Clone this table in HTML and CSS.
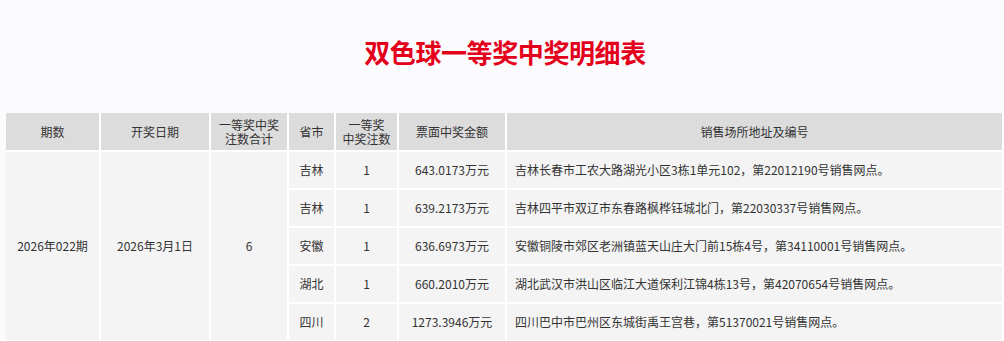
FILE: index.html
```html
<!DOCTYPE html>
<html lang="zh-CN">
<head>
<meta charset="utf-8">
<title>双色球一等奖中奖明细表</title>
<link rel="stylesheet" href="styles.css">
</head>
<body>
<div class="page">
  <h1 class="title">双色球一等奖中奖明细表</h1>
  <table class="detail">
    <colgroup>
      <col class="c1"><col class="c2"><col class="c3"><col class="c4"><col class="c5"><col class="c6"><col class="c7">
    </colgroup>
    <thead>
      <tr>
        <th>期数</th>
        <th>开奖日期</th>
        <th>一等奖中奖<br>注数合计</th>
        <th>省市</th>
        <th>一等奖<br>中奖注数</th>
        <th>票面中奖金额</th>
        <th>销售场所地址及编号</th>
      </tr>
    </thead>
    <tbody>
      <tr>
        <td rowspan="5">2026年022期</td>
        <td rowspan="5">2026年3月1日</td>
        <td rowspan="5">6</td>
        <td>吉林</td>
        <td>1</td>
        <td>643.0173万元</td>
        <td class="addr">吉林长春市工农大路湖光小区3栋1单元102，第22012190号销售网点。</td>
      </tr>
      <tr>
        <td>吉林</td>
        <td>1</td>
        <td>639.2173万元</td>
        <td class="addr">吉林四平市双辽市东春路枫桦钰城北门，第22030337号销售网点。</td>
      </tr>
      <tr>
        <td>安徽</td>
        <td>1</td>
        <td>636.6973万元</td>
        <td class="addr">安徽铜陵市郊区老洲镇蓝天山庄大门前15栋4号，第34110001号销售网点。</td>
      </tr>
      <tr>
        <td>湖北</td>
        <td>1</td>
        <td>660.2010万元</td>
        <td class="addr">湖北武汉市洪山区临江大道保利江锦4栋13号，第42070654号销售网点。</td>
      </tr>
      <tr>
        <td>四川</td>
        <td>2</td>
        <td>1273.3946万元</td>
        <td class="addr">四川巴中市巴州区东城街禹王宫巷，第51370021号销售网点。</td>
      </tr>
    </tbody>
  </table>
</div>
</body>
</html>
```
FILE: styles.css
```css
html, body {
  margin: 0;
  padding: 0;
  background: #fbfbfe;
  overflow: hidden;
}
.page {
  padding-left: 6px;
  font-family: "Noto Sans CJK SC", sans-serif;
  color: #333;
}
.title {
  margin: 0;
  padding-top: 37px;
  height: 76px;
  box-sizing: border-box;
  line-height: 30px;
  font-size: 26px;
  font-weight: bold;
  color: #e4001b;
  text-align: center;
  font-family: "Noto Sans CJK SC", sans-serif;
  letter-spacing: -0.4px;
  height: 113px;
}
.detail {
  width: 998px;
  table-layout: fixed;
  border-collapse: separate;
  border-spacing: 0;
  font-size: 12px;
}
.c1 { width: 95px; }
.c2 { width: 110px; }
.c3 { width: 78px; }
.c4 { width: 47px; }
.c5 { width: 63px; }
.c6 { width: 108px; }
.c7 { width: 497px; }
.detail th, .detail td {
  box-sizing: border-box;
  border-right: 2px solid #fff;
  border-bottom: 2px solid #fff;
  text-align: center;
  padding: 0 1px;
  font-family: "Noto Sans CJK SC", sans-serif;
}
.detail th {
  background: #dcdcdc;
  height: 39px;
  font-weight: normal;
  line-height: 14px;
  color: #333;
}
.detail td {
  background: #f4f4f4;
  height: 38px;
  line-height: 16px;
}
.detail td.addr {
  text-align: left;
  padding-left: 8px;
}
```
